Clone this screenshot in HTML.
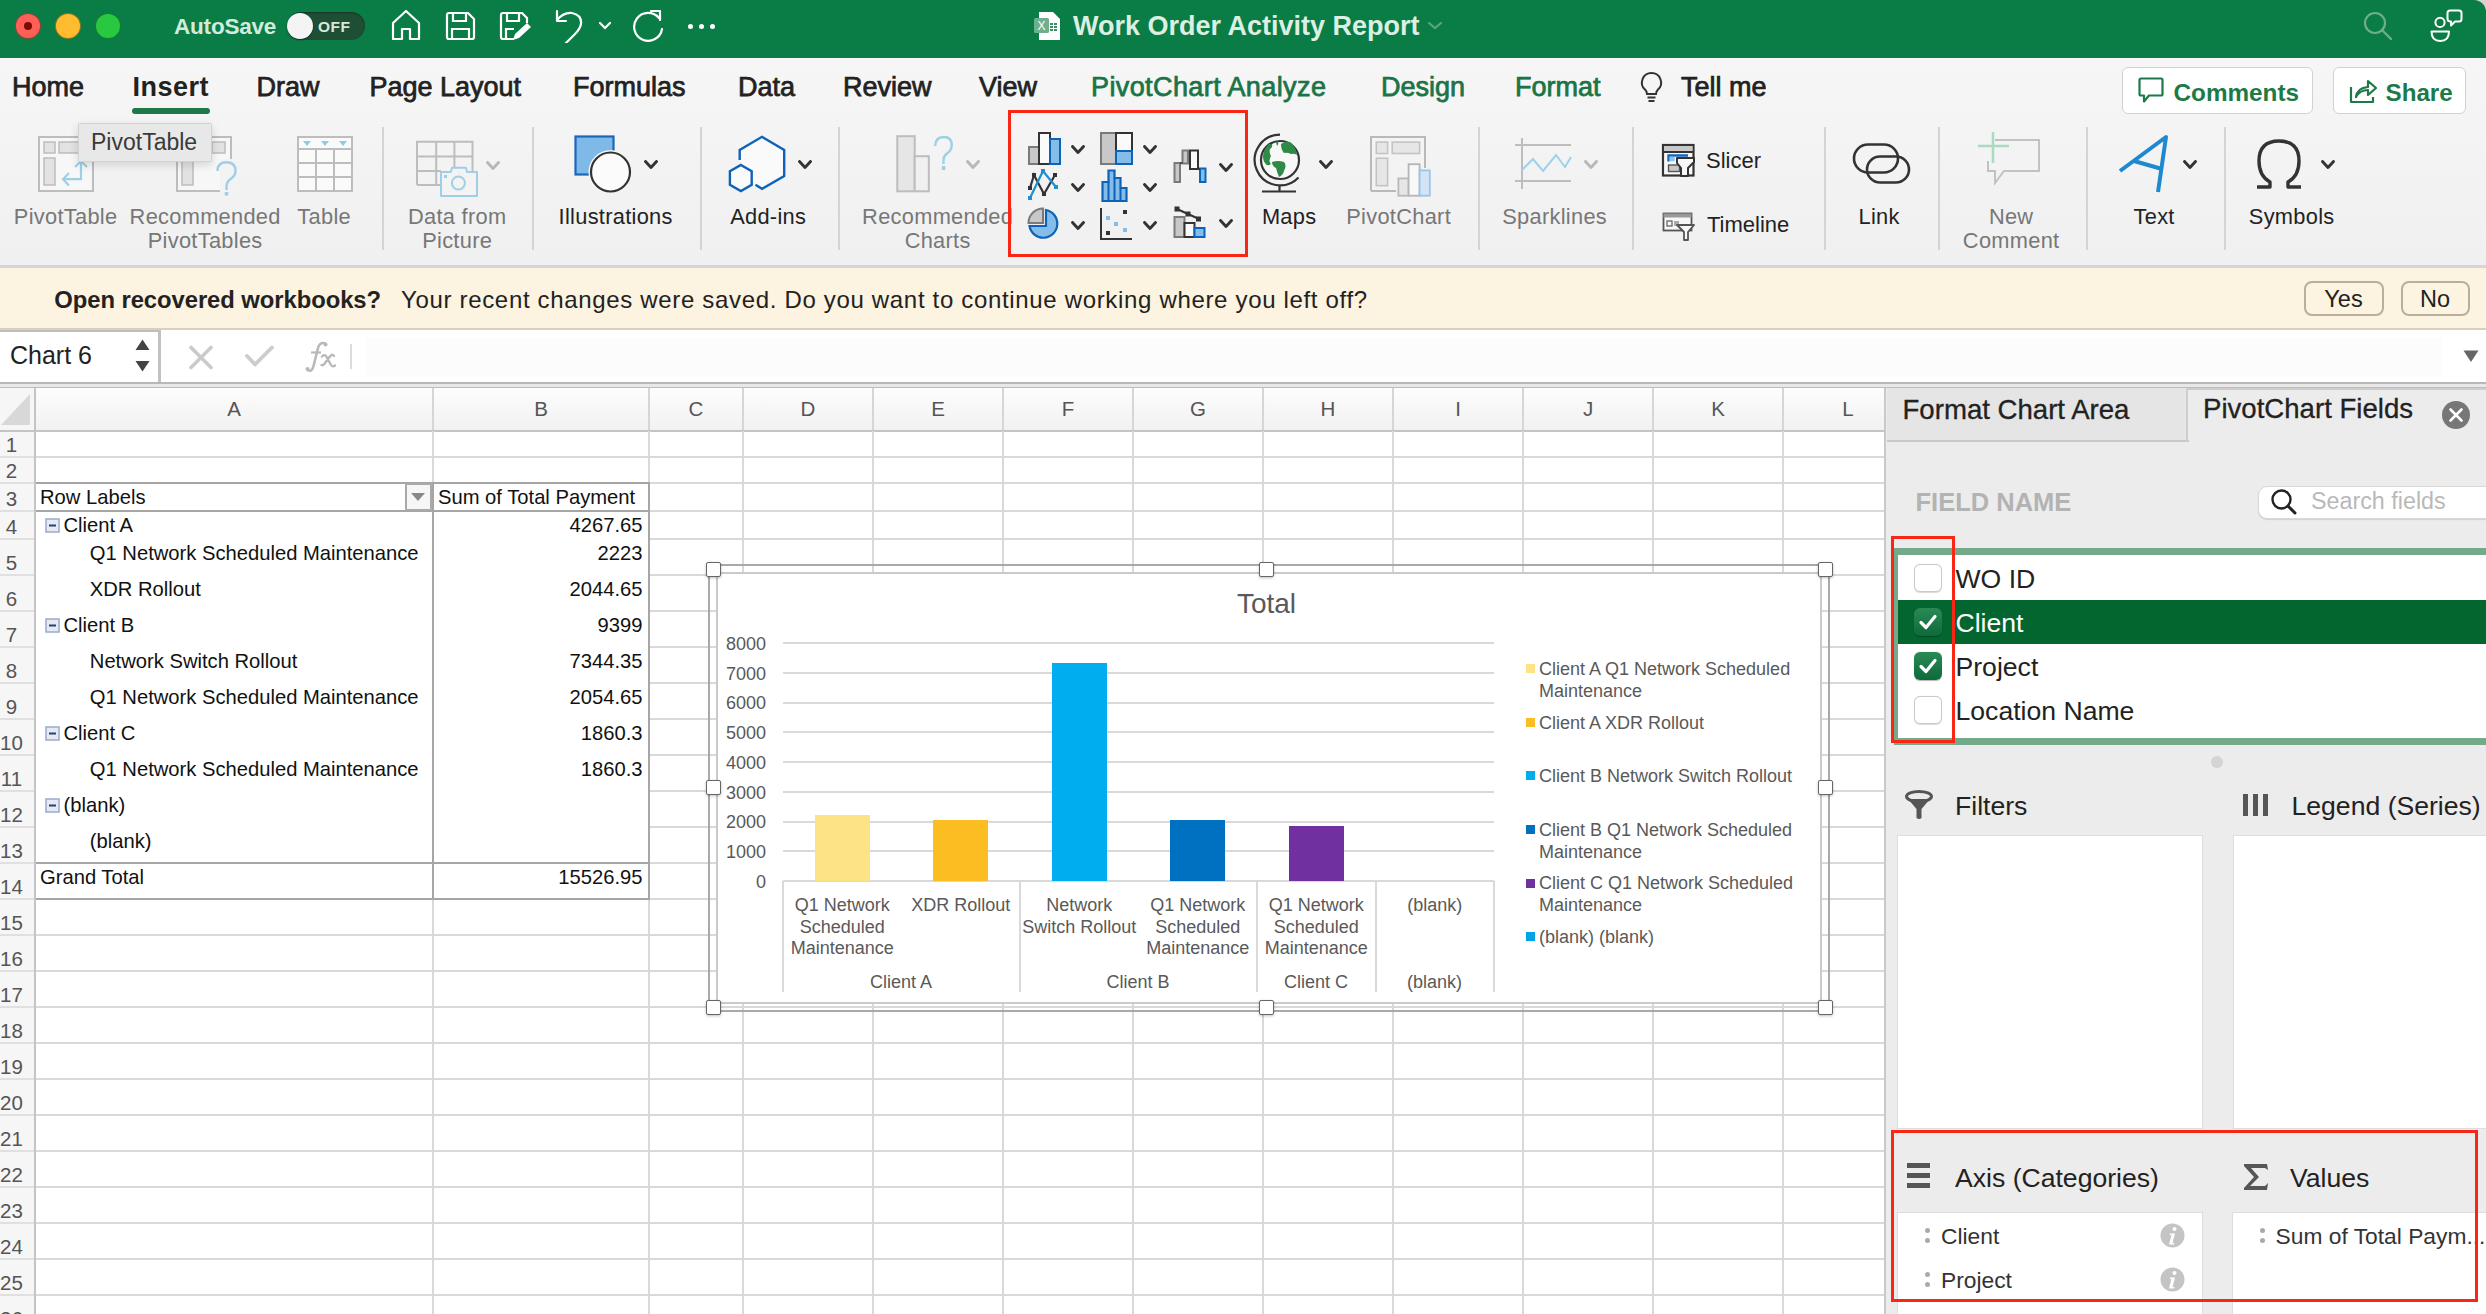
<!DOCTYPE html><html><head><meta charset="utf-8"><style>
*{margin:0;padding:0;box-sizing:border-box}
html,body{width:2486px;height:1314px;overflow:hidden;background:#fff}
body{position:relative;font-family:"Liberation Sans",sans-serif}
.t{position:absolute;white-space:pre;line-height:1.15}
.b{position:absolute}
</style></head><body>

<div class="b" style="left:0px;top:0px;width:2486px;height:58px;background:#0a7c45"></div>
<div class="b" style="left:15px;top:13px;width:26px;height:26px;background:#fe5f57;border-radius:50%;border:1.5px solid rgba(0,40,20,0.45)"></div>
<div class="b" style="left:55px;top:13px;width:26px;height:26px;background:#febc2e;border-radius:50%;border:1.5px solid rgba(0,40,20,0.45)"></div>
<div class="b" style="left:95px;top:13px;width:26px;height:26px;background:#28c840;border-radius:50%;border:1.5px solid rgba(0,40,20,0.45)"></div>
<div class="b" style="left:24px;top:22px;width:8px;height:8px;background:#7a0b05;border-radius:50%"></div>
<div class="t" style="left:174px;top:13.8px;font-size:22.5px;color:#d3ebdd;font-weight:700;letter-spacing:-0.2px">AutoSave</div>
<div class="b" style="left:287px;top:12px;width:78px;height:28px;background:#1e4f34;border-radius:14px;box-shadow:inset 0 1px 2px rgba(0,0,0,.35)"></div>
<div class="b" style="left:287px;top:13px;width:26px;height:26px;background:#f4f4f4;border-radius:50%;box-shadow:0 1px 2px rgba(0,0,0,.4)"></div>
<div class="t" style="left:318px;top:18.2px;font-size:15.5px;color:#d6e8dd;font-weight:700;letter-spacing:0.5px">OFF</div>
<svg class="b" style="left:390px;top:9px" width="32" height="32" viewBox="0 0 32 32"><path d="M3 14 L16 2 L29 14 L29 30 L20 30 L20 20 L12 20 L12 30 L3 30 Z" fill="none" stroke="#ffffff" stroke-width="2.2" stroke-linejoin="round"/></svg>
<svg class="b" style="left:445px;top:11px" width="31" height="30" viewBox="0 0 31 30"><path d="M2 4 Q2 2 4 2 L23 2 L29 8 L29 26 Q29 28 27 28 L4 28 Q2 28 2 26 Z" fill="none" stroke="#ffffff" stroke-width="2.2" stroke-linejoin="round"/><path d="M8 2 L8 10 L21 10 L21 2" fill="none" stroke="#ffffff" stroke-width="2.2"/><path d="M7 28 L7 18 L24 18 L24 28" fill="none" stroke="#ffffff" stroke-width="2.2"/></svg>
<svg class="b" style="left:499px;top:11px" width="34" height="31" viewBox="0 0 34 31"><path d="M15 28 L4 28 Q2 28 2 26 L2 4 Q2 2 4 2 L23 2 L28 7 L28 12" fill="none" stroke="#ffffff" stroke-width="2.2" stroke-linejoin="round"/><path d="M8 2 L8 10 L20 10 L20 2" fill="none" stroke="#ffffff" stroke-width="2.2"/><path d="M7 28 L7 18 L15 18" fill="none" stroke="#ffffff" stroke-width="2.2"/><path d="M14 29 L16 23 L28 12 L32 16 L20 27 Z" fill="#ffffff"/></svg>
<svg class="b" style="left:554px;top:9px" width="32" height="34" viewBox="0 0 32 34"><path d="M3 2 L3 12 L12 12" fill="none" stroke="#ffffff" stroke-width="2.2" stroke-linecap="round" stroke-linejoin="round"/><path d="M3 11 Q10 3 18 4 Q28 6 27 15 Q26 20 21 25 L8 38" fill="none" stroke="#ffffff" stroke-width="2.2" stroke-linecap="round"/></svg>
<svg class="b" style="left:598px;top:21px" width="14" height="10" viewBox="0 0 14 10"><path d="M2 2 L7 7 L12 2" fill="none" stroke="#ffffff" stroke-width="2.2" stroke-linecap="round"/></svg>
<svg class="b" style="left:631px;top:9px" width="34" height="34" viewBox="0 0 34 34"><path d="M28 9 A14 14 0 1 0 31 20" fill="none" stroke="#ffffff" stroke-width="2.2" stroke-linecap="round"/><path d="M20 2 L29 2 L29 11" fill="none" stroke="#ffffff" stroke-width="2.2" stroke-linecap="round" stroke-linejoin="round"/></svg>
<div class="b" style="left:687.5px;top:23.5px;width:5px;height:5px;background:#fff;border-radius:50%"></div>
<div class="b" style="left:698.5px;top:23.5px;width:5px;height:5px;background:#fff;border-radius:50%"></div>
<div class="b" style="left:709.5px;top:23.5px;width:5px;height:5px;background:#fff;border-radius:50%"></div>
<svg class="b" style="left:1034px;top:11px" width="28" height="30" viewBox="0 0 28 30"><path d="M5 1 L19 1 L26 8 L26 29 L5 29 Z" fill="#fff"/><rect x="0" y="7" width="15" height="15" rx="1.5" fill="#6fb08c"/><text x="7.5" y="19" font-size="12" fill="#fff" text-anchor="middle" font-family="Liberation Sans">X</text><g fill="#3e8d62"><rect x="16" y="12" width="3" height="2"/><rect x="20" y="12" width="3" height="2"/><rect x="16" y="15" width="3" height="2"/><rect x="20" y="15" width="3" height="2"/><rect x="16" y="18" width="3" height="2"/><rect x="20" y="18" width="3" height="2"/></g></svg>
<div class="t" style="left:1073px;top:11.4px;font-size:27px;color:#dcefe3;font-weight:700;">Work Order Activity Report</div>
<svg class="b" style="left:1427px;top:21px" width="16" height="10" viewBox="0 0 16 10"><path d="M2 2 L8 7 L14 2" fill="none" stroke="#5aa57c" stroke-width="2.2" stroke-linecap="round"/></svg>
<svg class="b" style="left:2362px;top:10px" width="32" height="32" viewBox="0 0 32 32"><circle cx="13" cy="13" r="10" fill="none" stroke="#6fae8b" stroke-width="2.2"/><path d="M20.5 20.5 L29 29" stroke="#6fae8b" stroke-width="2.4" stroke-linecap="round"/></svg>
<svg class="b" style="left:2428px;top:9px" width="36" height="34" viewBox="0 0 36 34"><circle cx="12" cy="13.4" r="4.6" fill="none" stroke="#ffffff" stroke-width="2"/><path d="M3.5 22.5 L21 22.5 Q21 32 12.3 32 Q3.5 32 3.5 22.5 Z" fill="none" stroke="#ffffff" stroke-width="2" stroke-linejoin="round"/><path d="M19.5 4 Q19.5 1.5 22 1.5 L31 1.5 Q33.5 1.5 33.5 4 L33.5 10 Q33.5 12.5 31 12.5 L27 12.5 L23 16.5 L23 12.5 Q19.5 12.5 19.5 10 Z" fill="none" stroke="#ffffff" stroke-width="2" stroke-linejoin="round"/></svg>
<svg class="b" style="left:2474px;top:0px" width="12" height="12" viewBox="0 0 12 12"><path d="M0 0 L12 0 L12 12 A12 12 0 0 0 0 0 Z" fill="#d9d4d4"/></svg>
<div class="b" style="left:0px;top:58px;width:2486px;height:208px;background:linear-gradient(#f6f6f6,#f0f0f0)"></div>
<div class="b" style="left:0px;top:265px;width:2486px;height:3px;background:#d6d6d6"></div>
<div class="t" style="left:12px;top:72.4px;font-size:27px;color:#222;font-weight:400;-webkit-text-stroke:0.75px currentColor;">Home</div>
<div class="t" style="left:256.5px;top:72.4px;font-size:27px;color:#222;font-weight:400;-webkit-text-stroke:0.75px currentColor;">Draw</div>
<div class="t" style="left:369.5px;top:72.4px;font-size:27px;color:#222;font-weight:400;-webkit-text-stroke:0.75px currentColor;">Page Layout</div>
<div class="t" style="left:573px;top:72.4px;font-size:27px;color:#222;font-weight:400;-webkit-text-stroke:0.75px currentColor;">Formulas</div>
<div class="t" style="left:738px;top:72.4px;font-size:27px;color:#222;font-weight:400;-webkit-text-stroke:0.75px currentColor;">Data</div>
<div class="t" style="left:843px;top:72.4px;font-size:27px;color:#222;font-weight:400;-webkit-text-stroke:0.75px currentColor;">Review</div>
<div class="t" style="left:979px;top:72.4px;font-size:27px;color:#222;font-weight:400;-webkit-text-stroke:0.75px currentColor;">View</div>
<div class="t" style="left:1091px;top:72.4px;font-size:27px;color:#1b7446;font-weight:400;-webkit-text-stroke:0.75px currentColor;letter-spacing:0.4px;">PivotChart Analyze</div>
<div class="t" style="left:1381px;top:72.4px;font-size:27px;color:#1b7446;font-weight:400;-webkit-text-stroke:0.75px currentColor;">Design</div>
<div class="t" style="left:1515px;top:72.4px;font-size:27px;color:#1b7446;font-weight:400;-webkit-text-stroke:0.75px currentColor;">Format</div>
<div class="t" style="left:1681px;top:72.4px;font-size:27px;color:#222;font-weight:400;-webkit-text-stroke:0.75px currentColor;">Tell me</div>
<div class="t" style="left:132.5px;top:72.4px;font-size:27px;color:#222;font-weight:700;letter-spacing:0.5px">Insert</div>
<div class="b" style="left:132px;top:108px;width:78px;height:6px;background:#1d7a48;border-radius:3px"></div>
<svg class="b" style="left:1639px;top:71px" width="25" height="32" viewBox="0 0 25 32"><path d="M12.5 2 A9.5 9.5 0 0 0 6 18.5 Q8 20.5 8 23 L17 23 Q17 20.5 19 18.5 A9.5 9.5 0 0 0 12.5 2 Z" fill="none" stroke="#333" stroke-width="2"/><path d="M8.5 26.5 L16.5 26.5 M9.5 30 L15.5 30" stroke="#333" stroke-width="2"/></svg>
<div class="b" style="left:2121.5px;top:66.5px;width:191px;height:47px;background:#fff;border:1.5px solid #d2d2d2;border-radius:6px"></div>
<svg class="b" style="left:2137px;top:77px" width="28" height="28" viewBox="0 0 28 28"><path d="M2.5 3 Q2.5 1.5 4 1.5 L24 1.5 Q25.5 1.5 25.5 3 L25.5 17 Q25.5 18.5 24 18.5 L12 18.5 L7 24.5 L7 18.5 L4 18.5 Q2.5 18.5 2.5 17 Z" fill="none" stroke="#1d7a48" stroke-width="2.2" stroke-linejoin="round"/></svg>
<div class="t" style="left:2173.5px;top:78.6px;font-size:24.3px;color:#1d7a48;font-weight:700;">Comments</div>
<div class="b" style="left:2333px;top:66.5px;width:133px;height:47px;background:#fff;border:1.5px solid #d2d2d2;border-radius:6px"></div>
<svg class="b" style="left:2348px;top:77px" width="30" height="28" viewBox="0 0 30 28"><path d="M3 10 L3 25 L25 25 L25 20" fill="none" stroke="#1d7a48" stroke-width="2.2" stroke-linejoin="round"/><path d="M8 20 Q9 11 20 10 L20 4 L28 11 L20 18 L20 13 Q12 13 8 20 Z" fill="none" stroke="#1d7a48" stroke-width="2.2" stroke-linejoin="round"/></svg>
<div class="t" style="left:2385.5px;top:78.7px;font-size:24.2px;color:#1d7a48;font-weight:700;">Share</div>
<div class="b" style="left:382px;top:126.5px;width:2px;height:123px;background:#d4d4d4"></div>
<div class="b" style="left:532px;top:126.5px;width:2px;height:123px;background:#d4d4d4"></div>
<div class="b" style="left:700px;top:126.5px;width:2px;height:123px;background:#d4d4d4"></div>
<div class="b" style="left:838px;top:126.5px;width:2px;height:123px;background:#d4d4d4"></div>
<div class="b" style="left:1477.5px;top:126.5px;width:2px;height:123px;background:#d4d4d4"></div>
<div class="b" style="left:1632px;top:126.5px;width:2px;height:123px;background:#d4d4d4"></div>
<div class="b" style="left:1824px;top:126.5px;width:2px;height:123px;background:#d4d4d4"></div>
<div class="b" style="left:1938px;top:126.5px;width:2px;height:123px;background:#d4d4d4"></div>
<div class="b" style="left:2086px;top:126.5px;width:2px;height:123px;background:#d4d4d4"></div>
<div class="b" style="left:2224px;top:126.5px;width:2px;height:123px;background:#d4d4d4"></div>
<div class="t" style="left:-934.35px;width:2000px;text-align:center;top:203.7px;font-size:21.8px;color:#777;font-weight:400;letter-spacing:0.3px">PivotTable</div>
<div class="t" style="left:-794.85px;width:2000px;text-align:center;top:203.7px;font-size:21.8px;color:#777;font-weight:400;letter-spacing:0.3px">Recommended</div>
<div class="t" style="left:-794.85px;width:2000px;text-align:center;top:227.5px;font-size:21.8px;color:#777;font-weight:400;letter-spacing:0.3px">PivotTables</div>
<div class="t" style="left:-675.85px;width:2000px;text-align:center;top:203.7px;font-size:21.8px;color:#777;font-weight:400;letter-spacing:0.3px">Table</div>
<div class="t" style="left:-542.85px;width:2000px;text-align:center;top:203.7px;font-size:21.8px;color:#777;font-weight:400;letter-spacing:0.3px">Data from</div>
<div class="t" style="left:-542.85px;width:2000px;text-align:center;top:227.5px;font-size:21.8px;color:#777;font-weight:400;letter-spacing:0.3px">Picture</div>
<div class="t" style="left:-384.35px;width:2000px;text-align:center;top:203.7px;font-size:21.8px;color:#222;font-weight:400;letter-spacing:0.3px">Illustrations</div>
<div class="t" style="left:-231.85000000000002px;width:2000px;text-align:center;top:203.7px;font-size:21.8px;color:#222;font-weight:400;letter-spacing:0.3px">Add-ins</div>
<div class="t" style="left:-62.35000000000002px;width:2000px;text-align:center;top:203.7px;font-size:21.8px;color:#777;font-weight:400;letter-spacing:0.3px">Recommended</div>
<div class="t" style="left:-62.35000000000002px;width:2000px;text-align:center;top:227.5px;font-size:21.8px;color:#777;font-weight:400;letter-spacing:0.3px">Charts</div>
<div class="t" style="left:289.1500000000001px;width:2000px;text-align:center;top:203.7px;font-size:21.8px;color:#222;font-weight:400;letter-spacing:0.3px">Maps</div>
<div class="t" style="left:398.6500000000001px;width:2000px;text-align:center;top:203.7px;font-size:21.8px;color:#777;font-weight:400;letter-spacing:0.3px">PivotChart</div>
<div class="t" style="left:554.6500000000001px;width:2000px;text-align:center;top:203.7px;font-size:21.8px;color:#777;font-weight:400;letter-spacing:0.3px">Sparklines</div>
<div class="t" style="left:879.1500000000001px;width:2000px;text-align:center;top:203.7px;font-size:21.8px;color:#222;font-weight:400;letter-spacing:0.3px">Link</div>
<div class="t" style="left:1011.1500000000001px;width:2000px;text-align:center;top:203.7px;font-size:21.8px;color:#777;font-weight:400;letter-spacing:0.3px">New</div>
<div class="t" style="left:1011.1500000000001px;width:2000px;text-align:center;top:227.5px;font-size:21.8px;color:#777;font-weight:400;letter-spacing:0.3px">Comment</div>
<div class="t" style="left:1154.15px;width:2000px;text-align:center;top:203.7px;font-size:21.8px;color:#222;font-weight:400;letter-spacing:0.3px">Text</div>
<div class="t" style="left:1291.65px;width:2000px;text-align:center;top:203.7px;font-size:21.8px;color:#222;font-weight:400;letter-spacing:0.3px">Symbols</div>
<div class="t" style="left:1706px;top:148.2px;font-size:22px;color:#222;font-weight:400;">Slicer</div>
<div class="t" style="left:1707px;top:212.2px;font-size:22px;color:#222;font-weight:400;">Timeline</div>
<svg class="b" style="left:38px;top:136px" width="56" height="56" viewBox="0 0 56 56"><rect x="1" y="1" width="54" height="54" fill="#f7f7f7" stroke="#bdbdbd" stroke-width="2"/><rect x="6" y="6" width="11" height="11" fill="#e2e2e2" stroke="#bdbdbd" stroke-width="1.5"/><rect x="21" y="6" width="28" height="11" fill="#e2e2e2" stroke="#bdbdbd" stroke-width="1.5"/><rect x="6" y="22" width="11" height="27" fill="#e2e2e2" stroke="#bdbdbd" stroke-width="1.5"/><path d="M43 25 L43 43.2 L25 43.2" fill="none" stroke="#9fcfe6" stroke-width="2.2"/><path d="M37 31 L43 25 L49 31 M31 37 L25 43.2 L31 49.5" fill="none" stroke="#9fcfe6" stroke-width="2.2"/></svg>
<svg class="b" style="left:176px;top:136px" width="62" height="62" viewBox="0 0 62 62"><rect x="1" y="1" width="54" height="54" fill="#f7f7f7" stroke="#bdbdbd" stroke-width="2"/><rect x="6" y="22" width="11" height="27" fill="#e2e2e2" stroke="#bdbdbd" stroke-width="1.5"/><rect x="36" y="6" width="13" height="11" fill="#e2e2e2" stroke="#bdbdbd" stroke-width="1.5"/><rect x="44" y="23" width="18" height="38" fill="#f3f3f3"/><path d="M41.5 35 Q41.5 26.3 50.5 26.3 Q59.5 26.3 59.5 35 Q59.5 40 54 43.5 Q50.5 46 50.5 51 L50.5 54" fill="none" stroke="#9fcfe6" stroke-width="2.4"/><rect x="48.7" y="56" width="3.6" height="3.6" fill="#9fcfe6"/></svg>
<div class="b" style="left:78px;top:123.4px;width:134px;height:38.5px;background:#e8e8e8;border:1px solid #d2d2d2;border-radius:1.5px;box-shadow:0 3px 8px rgba(0,0,0,0.14)"></div>
<div class="t" style="left:91px;top:128.8px;font-size:23px;color:#3a3a3a;font-weight:400;">PivotTable</div>
<svg class="b" style="left:297px;top:136px" width="56" height="56" viewBox="0 0 56 56"><rect x="1" y="1" width="54" height="54" fill="#fafafa" stroke="#bdbdbd" stroke-width="2"/><path d="M1 13 L55 13 M1 27 L55 27 M1 41 L55 41 M19 13 L19 55 M37 13 L37 55" stroke="#bdbdbd" stroke-width="2"/><path d="M6 5 L14 5 L10 10 Z M24 5 L32 5 L28 10 Z M42 5 L50 5 L46 10 Z" fill="#8fcbe8"/></svg>
<svg class="b" style="left:416px;top:140px" width="64" height="58" viewBox="0 0 64 58"><path d="M1 45 L1 1.7 L56.5 1.7 L56.5 31 M1 16.5 L56.5 16.5 M1 31 L25 31 M20.2 1.7 L20.2 45 M38.4 1.7 L38.4 27 M1 45 L25 45" fill="none" stroke="#bdbdbd" stroke-width="2"/><path d="M25 32 L34.8 32 L36 27.8 L50 27.8 L51 32 L61 32 L61 56 L25 56 Z" fill="#f3f3f3" stroke="#9fcfe6" stroke-width="2" stroke-linejoin="round"/><circle cx="42.4" cy="43" r="6.5" fill="none" stroke="#9fcfe6" stroke-width="2"/><rect x="28" y="35" width="3" height="3" fill="#9fcfe6"/></svg>
<svg class="b" style="left:486px;top:161px" width="14" height="10" viewBox="0 0 14 10"><path d="M1.5 1.5 L7.0 7.5 L12.5 1.5" fill="none" stroke="#b8b8b8" stroke-width="2.9" stroke-linecap="round" stroke-linejoin="round"/></svg>
<svg class="b" style="left:574px;top:135px" width="62" height="62" viewBox="0 0 62 62"><rect x="1.5" y="1.5" width="38" height="38" fill="#7fb9e8" stroke="#1a66b8" stroke-width="2.2"/><circle cx="36.5" cy="37" r="22" fill="#f4f4f4"/><circle cx="36.5" cy="37" r="19.5" fill="#fbfbfb" stroke="#333" stroke-width="2.2"/></svg>
<svg class="b" style="left:644px;top:160px" width="14" height="10" viewBox="0 0 14 10"><path d="M1.5 1.5 L7.0 7.5 L12.5 1.5" fill="none" stroke="#333" stroke-width="2.9" stroke-linecap="round" stroke-linejoin="round"/></svg>
<svg class="b" style="left:726px;top:133px" width="62" height="62" viewBox="0 0 62 62"><path d="M29.5 51.8 L36 55.8 L58.2 43 L58.2 17 L36 3.8 L13.7 17 L13.7 27" fill="#fafafa" stroke="#0f62b8" stroke-width="2.4" stroke-linejoin="miter"/><path d="M14.9 32 L25.7 38.2 L25.7 51.8 L14.9 58 L3.9 51.8 L3.9 38.2 Z" fill="#fafafa" stroke="#0f62b8" stroke-width="2.4"/></svg>
<svg class="b" style="left:798px;top:160px" width="14" height="10" viewBox="0 0 14 10"><path d="M1.5 1.5 L7.0 7.5 L12.5 1.5" fill="none" stroke="#333" stroke-width="2.9" stroke-linecap="round" stroke-linejoin="round"/></svg>
<svg class="b" style="left:896px;top:134px" width="62" height="62" viewBox="0 0 62 62"><rect x="1.3" y="2.2" width="17.4" height="55.1" fill="#e6e6e6" stroke="#bdbdbd" stroke-width="2"/><rect x="18.7" y="22.2" width="14.1" height="35.1" fill="#f0f0f0" stroke="#bdbdbd" stroke-width="2"/><path d="M39.2 12 Q39.5 3 47.5 3 Q55.8 3 55.8 11 Q55.8 16 51 19.5 Q47.5 22 47.5 26 L47.5 30" fill="none" stroke="#9fcfe6" stroke-width="2.4"/><rect x="45.8" y="32" width="3.6" height="4" fill="#9fcfe6"/></svg>
<svg class="b" style="left:966px;top:160px" width="14" height="10" viewBox="0 0 14 10"><path d="M1.5 1.5 L7.0 7.5 L12.5 1.5" fill="none" stroke="#b8b8b8" stroke-width="2.9" stroke-linecap="round" stroke-linejoin="round"/></svg>
<div class="b" style="left:1007.5px;top:110px;width:240px;height:147px;border:3px solid #f92616"></div>
<svg class="b" style="left:1028px;top:132px" width="33" height="33" viewBox="0 0 33 33"><rect x="1" y="15" width="10" height="17" fill="#c8c8c8" stroke="#7a7a7a" stroke-width="2"/><rect x="11" y="1" width="11" height="31" fill="#fafafa" stroke="#333" stroke-width="2"/><rect x="22" y="7" width="10" height="25" fill="#84bde9" stroke="#0d63b8" stroke-width="2"/></svg>
<svg class="b" style="left:1071px;top:145px" width="14" height="10" viewBox="0 0 14 10"><path d="M1.5 1.5 L7.0 7.5 L12.5 1.5" fill="none" stroke="#333" stroke-width="2.9" stroke-linecap="round" stroke-linejoin="round"/></svg>
<svg class="b" style="left:1100px;top:132px" width="33" height="33" viewBox="0 0 33 33"><rect x="1" y="1" width="15" height="31" fill="#c8c8c8" stroke="#7a7a7a" stroke-width="2"/><rect x="16" y="1" width="16" height="18" fill="#fafafa" stroke="#333" stroke-width="2"/><rect x="16" y="19" width="16" height="13" fill="#84bde9" stroke="#0d63b8" stroke-width="2"/></svg>
<svg class="b" style="left:1143px;top:145px" width="14" height="10" viewBox="0 0 14 10"><path d="M1.5 1.5 L7.0 7.5 L12.5 1.5" fill="none" stroke="#333" stroke-width="2.9" stroke-linecap="round" stroke-linejoin="round"/></svg>
<svg class="b" style="left:1173px;top:149px" width="35" height="35" viewBox="0 0 35 35"><rect x="1.5" y="14" width="5.5" height="19" fill="#c8c8c8" stroke="#7a7a7a" stroke-width="2"/><rect x="9.5" y="1.5" width="5.5" height="13" fill="#c8c8c8" stroke="#7a7a7a" stroke-width="2"/><rect x="17" y="1.5" width="8" height="18.5" fill="#fafafa" stroke="#333" stroke-width="2"/><rect x="27" y="19.5" width="5.5" height="13.5" fill="#84bde9" stroke="#0d63b8" stroke-width="2"/><path d="M7 14 L9.5 14 M25 20 L27 20" stroke="#333" stroke-width="1.5"/></svg>
<svg class="b" style="left:1219px;top:163px" width="14" height="10" viewBox="0 0 14 10"><path d="M1.5 1.5 L7.0 7.5 L12.5 1.5" fill="none" stroke="#333" stroke-width="2.9" stroke-linecap="round" stroke-linejoin="round"/></svg>
<svg class="b" style="left:1027px;top:169px" width="34" height="33" viewBox="0 0 34 33"><path d="M3 19 L7 6 L17 25 L28 6" fill="none" stroke="#333" stroke-width="2.2"/><path d="M3 29 L16 2 L29 18" fill="none" stroke="#1e90d0" stroke-width="2.2"/><rect x="1" y="17" width="4" height="4" fill="#333"/><rect x="5" y="4" width="4" height="4" fill="#333"/><rect x="15" y="23" width="4" height="4" fill="#333"/><rect x="26" y="4" width="4" height="4" fill="#333"/><rect x="1" y="27" width="4" height="4" fill="#1e90d0"/><rect x="14" y="0" width="4" height="4" fill="#1e90d0"/><rect x="27" y="16" width="4" height="4" fill="#1e90d0"/></svg>
<svg class="b" style="left:1071px;top:183px" width="14" height="10" viewBox="0 0 14 10"><path d="M1.5 1.5 L7.0 7.5 L12.5 1.5" fill="none" stroke="#333" stroke-width="2.9" stroke-linecap="round" stroke-linejoin="round"/></svg>
<svg class="b" style="left:1101px;top:169px" width="30" height="34" viewBox="0 0 30 34"><path d="M1.5 32 L1.5 13 L7.5 13 L7.5 1.5 L13.5 1.5 L13.5 9 L19.5 9 L19.5 19 L25.5 19 L25.5 32 Z" fill="#84bde9" stroke="#0d63b8" stroke-width="2.2"/><path d="M7.5 13 L7.5 32 M13.5 9 L13.5 32 M19.5 19 L19.5 32" stroke="#0d63b8" stroke-width="2"/></svg>
<svg class="b" style="left:1143px;top:183px" width="14" height="10" viewBox="0 0 14 10"><path d="M1.5 1.5 L7.0 7.5 L12.5 1.5" fill="none" stroke="#333" stroke-width="2.9" stroke-linecap="round" stroke-linejoin="round"/></svg>
<svg class="b" style="left:1027px;top:207px" width="34" height="34" viewBox="0 0 34 34"><path d="M16 16 L16 1.5 A14.5 14.5 0 0 0 1.5 16 Z" fill="#c8c8c8" stroke="#7a7a7a" stroke-width="2"/><path d="M19 3 A14 14 0 1 1 2.5 19 L19 19 Z" fill="#84bde9" stroke="#0d63b8" stroke-width="2.2"/></svg>
<svg class="b" style="left:1071px;top:221px" width="14" height="10" viewBox="0 0 14 10"><path d="M1.5 1.5 L7.0 7.5 L12.5 1.5" fill="none" stroke="#333" stroke-width="2.9" stroke-linecap="round" stroke-linejoin="round"/></svg>
<svg class="b" style="left:1099px;top:207px" width="34" height="34" viewBox="0 0 34 34"><path d="M2 1 L2 32 L33 32" fill="none" stroke="#333" stroke-width="2"/><rect x="7" y="9" width="4" height="4" fill="#84bde9"/><rect x="15" y="15" width="4" height="4" fill="#84bde9"/><rect x="24" y="21" width="4" height="4" fill="#84bde9"/><rect x="24" y="3" width="4" height="4" fill="#333"/><rect x="7" y="24" width="4" height="4" fill="#333"/></svg>
<svg class="b" style="left:1143px;top:221px" width="14" height="10" viewBox="0 0 14 10"><path d="M1.5 1.5 L7.0 7.5 L12.5 1.5" fill="none" stroke="#333" stroke-width="2.9" stroke-linecap="round" stroke-linejoin="round"/></svg>
<svg class="b" style="left:1173px;top:205px" width="34" height="34" viewBox="0 0 34 34"><rect x="1.5" y="12" width="10" height="20" fill="#c8c8c8" stroke="#7a7a7a" stroke-width="2"/><rect x="11.5" y="18" width="10" height="14" fill="#fafafa" stroke="#333" stroke-width="2"/><rect x="21.5" y="23" width="10" height="9" fill="#84bde9" stroke="#0d63b8" stroke-width="2"/><path d="M4 4 L15 9 L26 14" stroke="#333" stroke-width="2"/><rect x="1.5" y="1.5" width="5" height="5" fill="#333"/><rect x="12.5" y="6.5" width="5" height="5" fill="#333"/><rect x="23" y="11.5" width="5" height="5" fill="#333"/></svg>
<svg class="b" style="left:1219px;top:219px" width="14" height="10" viewBox="0 0 14 10"><path d="M1.5 1.5 L7.0 7.5 L12.5 1.5" fill="none" stroke="#333" stroke-width="2.9" stroke-linecap="round" stroke-linejoin="round"/></svg>
<svg class="b" style="left:1250px;top:130px" width="54" height="64" viewBox="0 0 54 64"><path d="M30 4.6 A25.4 25.4 0 1 0 48.5 47.5" fill="none" stroke="#333" stroke-width="2.2"/><circle cx="30" cy="30" r="19" fill="#f8f8f8" stroke="#333" stroke-width="2.2"/><path d="M13 26 Q14 18 19 14 L22 14 Q23 17 20 19 Q19 23 21 26 Q18 31 21 34 Q17 37 15 33 Q13 31 13 26 Z" fill="#2f8a47"/><path d="M26 12 L28 11 Q29 14 27 16 Z M31 14 Q35 11 40 12 Q46 16 47 25 Q44 23 41 24 Q37 22 34 23 Q31 20 31 14 Z" fill="#2f8a47"/><path d="M22 32 Q28 30 34 32 Q37 35 34 41 Q33 45 29 47 Q27 42 26 38 Q22 36 22 32 Z" fill="#2f8a47"/><path d="M29.5 56 L29.5 61 M12 61.5 L46 61.5" stroke="#333" stroke-width="2.2"/></svg>
<svg class="b" style="left:1319px;top:160px" width="14" height="10" viewBox="0 0 14 10"><path d="M1.5 1.5 L7.0 7.5 L12.5 1.5" fill="none" stroke="#333" stroke-width="2.9" stroke-linecap="round" stroke-linejoin="round"/></svg>
<svg class="b" style="left:1369px;top:135px" width="64" height="64" viewBox="0 0 64 64"><path d="M2 56 L2 2 L56 2 L56 33 M2 56 L27 56" fill="none" stroke="#b9b9b9" stroke-width="2"/><rect x="7.3" y="7.1" width="11.3" height="11.4" fill="#e6e6e6" stroke="#c4c4c4" stroke-width="1.6"/><rect x="23.2" y="7.1" width="27.4" height="11.4" fill="#e6e6e6" stroke="#c4c4c4" stroke-width="1.6"/><rect x="7.3" y="23.2" width="11.3" height="27.5" fill="#e6e6e6" stroke="#c4c4c4" stroke-width="1.6"/><rect x="29.4" y="43.4" width="10.2" height="17.3" fill="#e6e6e6" stroke="#b9b9b9" stroke-width="1.8"/><rect x="39.6" y="29.2" width="11" height="31.5" fill="#f8f8f8" stroke="#b5b5b5" stroke-width="1.8"/><rect x="50.6" y="35.4" width="10.2" height="25.3" fill="#d3e5f5" stroke="#9cc4e6" stroke-width="1.8"/></svg>
<svg class="b" style="left:1513px;top:137px" width="60" height="52" viewBox="0 0 60 52"><path d="M2 44 L58 44 M9 1 L9 52 M2 8 L58 8" stroke="#bdbdbd" stroke-width="2"/><path d="M9 33 L20 22 L30 34 L43 18 L52 30 L58 20" fill="none" stroke="#9fd0ea" stroke-width="2"/></svg>
<svg class="b" style="left:1584px;top:160px" width="14" height="10" viewBox="0 0 14 10"><path d="M1.5 1.5 L7.0 7.5 L12.5 1.5" fill="none" stroke="#b8b8b8" stroke-width="2.9" stroke-linecap="round" stroke-linejoin="round"/></svg>
<svg class="b" style="left:1660px;top:142px" width="36" height="36" viewBox="0 0 36 36"><rect x="3" y="3" width="30.5" height="30.5" fill="#f8f8f8" stroke="#333" stroke-width="2.2"/><rect x="4" y="4" width="28.5" height="5" fill="#c8c8c8"/><path d="M3 10 L33.5 10" stroke="#333" stroke-width="2"/><path d="M8.5 19.5 L8.5 13.5 L28 13.5" fill="none" stroke="#1066c0" stroke-width="2.4"/><rect x="9.7" y="14.7" width="5" height="4.5" fill="#8cc3ee"/><rect x="8.5" y="23" width="11" height="6.5" fill="#c8c8c8" stroke="#555" stroke-width="1.4"/><path d="M17 16 L34 16 L34 20 L28 26 L28 34 L21 34 L21 26 L17 21 Z" fill="#f8f8f8" stroke="#333" stroke-width="2" stroke-linejoin="round"/></svg>
<svg class="b" style="left:1662px;top:212px" width="34" height="30" viewBox="0 0 34 30"><rect x="1.5" y="1.5" width="28" height="17" fill="#f8f8f8" stroke="#555" stroke-width="1.8"/><rect x="1.5" y="1.5" width="28" height="4" fill="#999"/><rect x="5" y="9" width="5" height="5" fill="none" stroke="#666" stroke-width="1.3"/><rect x="12" y="9" width="5" height="5" fill="#aaa"/><path d="M15 13 L32 13 L26 20 L26 28 L22 28 L22 20 Z" fill="#f8f8f8" stroke="#555" stroke-width="1.8" stroke-linejoin="round"/></svg>
<svg class="b" style="left:1851px;top:141px" width="62" height="46" viewBox="0 0 62 46"><rect x="3" y="3.5" width="44" height="28" rx="14" fill="none" stroke="#333" stroke-width="2.6"/><rect x="16" y="15.5" width="42" height="26" rx="13" fill="none" stroke="#333" stroke-width="2.6"/></svg>
<svg class="b" style="left:1977px;top:131px" width="64" height="60" viewBox="0 0 64 60"><path d="M18 9 L62 9 L62 40 L27 40 L18 52 L18 40 L11 40 L11 30" fill="#f3f3f3" stroke="#c2c2c2" stroke-width="2"/><path d="M16 1 L16 32 M1 15 L32 15" stroke="#a7dcc0" stroke-width="2.5"/></svg>
<svg class="b" style="left:2118px;top:134px" width="52" height="60" viewBox="0 0 52 60"><path d="M2 37 L48 3 L40 58" fill="none" stroke="#1e88d0" stroke-width="4" stroke-linejoin="round"/><path d="M16 27 L44 35" stroke="#1e88d0" stroke-width="4"/></svg>
<svg class="b" style="left:2183px;top:160px" width="14" height="10" viewBox="0 0 14 10"><path d="M1.5 1.5 L7.0 7.5 L12.5 1.5" fill="none" stroke="#333" stroke-width="2.9" stroke-linecap="round" stroke-linejoin="round"/></svg>
<svg class="b" style="left:2255px;top:139px" width="50" height="51" viewBox="0 0 50 51"><path d="M2 48 L15 48 L15 43 Q4 37 4 22 Q4 2 24 2 Q44 2 44 22 Q44 37 33 43 L33 48 L46 48" fill="none" stroke="#333" stroke-width="3.4" stroke-linejoin="round"/></svg>
<svg class="b" style="left:2321px;top:160px" width="14" height="10" viewBox="0 0 14 10"><path d="M1.5 1.5 L7.0 7.5 L12.5 1.5" fill="none" stroke="#333" stroke-width="2.9" stroke-linecap="round" stroke-linejoin="round"/></svg>
<div class="b" style="left:0px;top:268px;width:2486px;height:61px;background:#fcf3e0"></div>
<div class="b" style="left:0px;top:328px;width:2486px;height:2px;background:#d9d0bc"></div>
<div class="t" style="left:54.3px;top:286.1px;font-size:23.8px;color:#222;font-weight:700;letter-spacing:-0.05px">Open recovered workbooks?</div>
<div class="t" style="left:401px;top:285.9px;font-size:24px;color:#222;font-weight:400;letter-spacing:0.67px">Your recent changes were saved. Do you want to continue working where you left off?</div>
<div class="b" style="left:2304px;top:280.5px;width:79.5px;height:35px;border:2px solid #b7af9c;border-radius:8px"></div>
<div class="t" style="left:1343.5px;width:2000px;text-align:center;top:286.3px;font-size:23.5px;color:#222;font-weight:400;">Yes</div>
<div class="b" style="left:2400.5px;top:280.5px;width:69px;height:35px;border:2px solid #b7af9c;border-radius:8px"></div>
<div class="t" style="left:1435px;width:2000px;text-align:center;top:286.3px;font-size:23.5px;color:#222;font-weight:400;">No</div>
<div class="b" style="left:0px;top:330px;width:2486px;height:52px;background:#fff"></div>
<div class="b" style="left:366px;top:338px;width:2076px;height:38px;background:#fcfcfc"></div>
<div class="b" style="left:0px;top:330px;width:161px;height:2px;background:#bdbdbd"></div>
<div class="b" style="left:158px;top:330px;width:3px;height:52px;background:#c2c2c2"></div>
<div class="t" style="left:10px;top:341.0px;font-size:25px;color:#222;font-weight:400;">Chart 6</div>
<svg class="b" style="left:134px;top:338px" width="18" height="36" viewBox="0 0 18 36"><path d="M1.5 12 L8.5 1.5 L15.5 12 Z M1.5 23 L8.5 33.5 L15.5 23 Z" fill="#444"/></svg>
<svg class="b" style="left:187px;top:345px" width="28" height="25" viewBox="0 0 28 25"><path d="M4 2.5 L24 22.5 M24 2.5 L4 22.5" stroke="#cacaca" stroke-width="3.6" stroke-linecap="round"/></svg>
<svg class="b" style="left:244px;top:344px" width="32" height="26" viewBox="0 0 32 26"><path d="M3 12 L11 20.5 L28 3.5" fill="none" stroke="#cccccc" stroke-width="3.8" stroke-linecap="round" stroke-linejoin="round"/></svg>
<svg class="b" style="left:303px;top:340px" width="36" height="34" viewBox="0 0 36 34"><path d="M4 29 Q5.5 31.5 8 30.5 Q10 29.5 11.5 22 L15 8 Q16.5 3 20 3 Q22.5 3 23 4.5" fill="none" stroke="#b9b9b9" stroke-width="2.6" stroke-linecap="round"/><circle cx="4.5" cy="29" r="2" fill="#b9b9b9"/><circle cx="22.5" cy="4.5" r="2" fill="#b9b9b9"/><path d="M8 12.5 L18 12.5" stroke="#b9b9b9" stroke-width="2.2"/><path d="M19 16.5 Q21 14 23 16 L28 25 Q29.5 27.5 32 25.5 M31 16 Q30 14 28.5 15 Q26 17 23.5 21 Q20.5 26 18.5 25" fill="none" stroke="#b9b9b9" stroke-width="2.4" stroke-linecap="round"/></svg>
<div class="b" style="left:350px;top:344px;width:2px;height:25px;background:#dcdcdc"></div>
<svg class="b" style="left:2463px;top:350px" width="16" height="13" viewBox="0 0 16 13"><path d="M0.5 0.5 L15.5 0.5 L8 12 Z" fill="#666"/></svg>
<div class="b" style="left:0px;top:382px;width:2486px;height:2px;background:#b8b8b8"></div>
<div class="b" style="left:0px;top:384px;width:2486px;height:3px;background:#e8e8e8"></div>
<div class="b" style="left:0px;top:386.5px;width:2486px;height:1.5px;background:#bdbdbd"></div>
<div class="b" style="left:35px;top:388px;width:1850px;height:43px;background:linear-gradient(#fdfdfd,#f1f1f1)"></div>
<div class="b" style="left:0px;top:388px;width:35px;height:926px;background:#f6f6f6"></div>
<svg class="b" style="left:0px;top:388px" width="33" height="42" viewBox="0 0 33 42"><path d="M30 6 L30 37 L1 37 Z" fill="#d8d8d8"/></svg>
<div class="b" style="left:0px;top:429.5px;width:1885px;height:2px;background:#c4c4c4"></div>
<div class="b" style="left:33.5px;top:388px;width:2px;height:926px;background:#c4c4c4"></div>
<div class="b" style="left:35.5px;top:431.5px;width:1850px;height:883px;background:#fff"></div>
<div class="b" style="left:432px;top:388px;width:2px;height:42px;background:#d6d6d6"></div>
<div class="b" style="left:432px;top:431px;width:2px;height:883px;background:#d9d9d9"></div>
<div class="b" style="left:648px;top:388px;width:2px;height:42px;background:#d6d6d6"></div>
<div class="b" style="left:648px;top:431px;width:2px;height:883px;background:#d9d9d9"></div>
<div class="b" style="left:742px;top:388px;width:2px;height:42px;background:#d6d6d6"></div>
<div class="b" style="left:742px;top:431px;width:2px;height:883px;background:#d9d9d9"></div>
<div class="b" style="left:872px;top:388px;width:2px;height:42px;background:#d6d6d6"></div>
<div class="b" style="left:872px;top:431px;width:2px;height:883px;background:#d9d9d9"></div>
<div class="b" style="left:1002px;top:388px;width:2px;height:42px;background:#d6d6d6"></div>
<div class="b" style="left:1002px;top:431px;width:2px;height:883px;background:#d9d9d9"></div>
<div class="b" style="left:1132px;top:388px;width:2px;height:42px;background:#d6d6d6"></div>
<div class="b" style="left:1132px;top:431px;width:2px;height:883px;background:#d9d9d9"></div>
<div class="b" style="left:1262px;top:388px;width:2px;height:42px;background:#d6d6d6"></div>
<div class="b" style="left:1262px;top:431px;width:2px;height:883px;background:#d9d9d9"></div>
<div class="b" style="left:1392px;top:388px;width:2px;height:42px;background:#d6d6d6"></div>
<div class="b" style="left:1392px;top:431px;width:2px;height:883px;background:#d9d9d9"></div>
<div class="b" style="left:1522px;top:388px;width:2px;height:42px;background:#d6d6d6"></div>
<div class="b" style="left:1522px;top:431px;width:2px;height:883px;background:#d9d9d9"></div>
<div class="b" style="left:1652px;top:388px;width:2px;height:42px;background:#d6d6d6"></div>
<div class="b" style="left:1652px;top:431px;width:2px;height:883px;background:#d9d9d9"></div>
<div class="b" style="left:1782px;top:388px;width:2px;height:42px;background:#d6d6d6"></div>
<div class="b" style="left:1782px;top:431px;width:2px;height:883px;background:#d9d9d9"></div>
<div class="b" style="left:0px;top:456px;width:33.5px;height:2px;background:#e0e0e0"></div>
<div class="b" style="left:35.5px;top:456px;width:1850px;height:2px;background:#d9d9d9"></div>
<div class="b" style="left:0px;top:482px;width:33.5px;height:2px;background:#e0e0e0"></div>
<div class="b" style="left:35.5px;top:482px;width:1850px;height:2px;background:#d9d9d9"></div>
<div class="b" style="left:0px;top:510px;width:33.5px;height:2px;background:#e0e0e0"></div>
<div class="b" style="left:35.5px;top:510px;width:1850px;height:2px;background:#d9d9d9"></div>
<div class="b" style="left:0px;top:538px;width:33.5px;height:2px;background:#e0e0e0"></div>
<div class="b" style="left:35.5px;top:538px;width:1850px;height:2px;background:#d9d9d9"></div>
<div class="b" style="left:0px;top:574px;width:33.5px;height:2px;background:#e0e0e0"></div>
<div class="b" style="left:35.5px;top:574px;width:1850px;height:2px;background:#d9d9d9"></div>
<div class="b" style="left:0px;top:610px;width:33.5px;height:2px;background:#e0e0e0"></div>
<div class="b" style="left:35.5px;top:610px;width:1850px;height:2px;background:#d9d9d9"></div>
<div class="b" style="left:0px;top:646px;width:33.5px;height:2px;background:#e0e0e0"></div>
<div class="b" style="left:35.5px;top:646px;width:1850px;height:2px;background:#d9d9d9"></div>
<div class="b" style="left:0px;top:682px;width:33.5px;height:2px;background:#e0e0e0"></div>
<div class="b" style="left:35.5px;top:682px;width:1850px;height:2px;background:#d9d9d9"></div>
<div class="b" style="left:0px;top:718px;width:33.5px;height:2px;background:#e0e0e0"></div>
<div class="b" style="left:35.5px;top:718px;width:1850px;height:2px;background:#d9d9d9"></div>
<div class="b" style="left:0px;top:754px;width:33.5px;height:2px;background:#e0e0e0"></div>
<div class="b" style="left:35.5px;top:754px;width:1850px;height:2px;background:#d9d9d9"></div>
<div class="b" style="left:0px;top:790px;width:33.5px;height:2px;background:#e0e0e0"></div>
<div class="b" style="left:35.5px;top:790px;width:1850px;height:2px;background:#d9d9d9"></div>
<div class="b" style="left:0px;top:826px;width:33.5px;height:2px;background:#e0e0e0"></div>
<div class="b" style="left:35.5px;top:826px;width:1850px;height:2px;background:#d9d9d9"></div>
<div class="b" style="left:0px;top:862px;width:33.5px;height:2px;background:#e0e0e0"></div>
<div class="b" style="left:35.5px;top:862px;width:1850px;height:2px;background:#d9d9d9"></div>
<div class="b" style="left:0px;top:898px;width:33.5px;height:2px;background:#e0e0e0"></div>
<div class="b" style="left:35.5px;top:898px;width:1850px;height:2px;background:#d9d9d9"></div>
<div class="b" style="left:0px;top:934px;width:33.5px;height:2px;background:#e0e0e0"></div>
<div class="b" style="left:35.5px;top:934px;width:1850px;height:2px;background:#d9d9d9"></div>
<div class="b" style="left:0px;top:970px;width:33.5px;height:2px;background:#e0e0e0"></div>
<div class="b" style="left:35.5px;top:970px;width:1850px;height:2px;background:#d9d9d9"></div>
<div class="b" style="left:0px;top:1006px;width:33.5px;height:2px;background:#e0e0e0"></div>
<div class="b" style="left:35.5px;top:1006px;width:1850px;height:2px;background:#d9d9d9"></div>
<div class="b" style="left:0px;top:1042px;width:33.5px;height:2px;background:#e0e0e0"></div>
<div class="b" style="left:35.5px;top:1042px;width:1850px;height:2px;background:#d9d9d9"></div>
<div class="b" style="left:0px;top:1078px;width:33.5px;height:2px;background:#e0e0e0"></div>
<div class="b" style="left:35.5px;top:1078px;width:1850px;height:2px;background:#d9d9d9"></div>
<div class="b" style="left:0px;top:1114px;width:33.5px;height:2px;background:#e0e0e0"></div>
<div class="b" style="left:35.5px;top:1114px;width:1850px;height:2px;background:#d9d9d9"></div>
<div class="b" style="left:0px;top:1150px;width:33.5px;height:2px;background:#e0e0e0"></div>
<div class="b" style="left:35.5px;top:1150px;width:1850px;height:2px;background:#d9d9d9"></div>
<div class="b" style="left:0px;top:1186px;width:33.5px;height:2px;background:#e0e0e0"></div>
<div class="b" style="left:35.5px;top:1186px;width:1850px;height:2px;background:#d9d9d9"></div>
<div class="b" style="left:0px;top:1222px;width:33.5px;height:2px;background:#e0e0e0"></div>
<div class="b" style="left:35.5px;top:1222px;width:1850px;height:2px;background:#d9d9d9"></div>
<div class="b" style="left:0px;top:1258px;width:33.5px;height:2px;background:#e0e0e0"></div>
<div class="b" style="left:35.5px;top:1258px;width:1850px;height:2px;background:#d9d9d9"></div>
<div class="b" style="left:0px;top:1294px;width:33.5px;height:2px;background:#e0e0e0"></div>
<div class="b" style="left:35.5px;top:1294px;width:1850px;height:2px;background:#d9d9d9"></div>
<div class="b" style="left:0px;top:1330px;width:33.5px;height:2px;background:#e0e0e0"></div>
<div class="b" style="left:35.5px;top:1330px;width:1850px;height:2px;background:#d9d9d9"></div>
<div class="t" style="left:-766.0px;width:2000px;text-align:center;top:396.6px;font-size:20.5px;color:#555;font-weight:400;">A</div>
<div class="t" style="left:-459.0px;width:2000px;text-align:center;top:396.6px;font-size:20.5px;color:#555;font-weight:400;">B</div>
<div class="t" style="left:-304.0px;width:2000px;text-align:center;top:396.6px;font-size:20.5px;color:#555;font-weight:400;">C</div>
<div class="t" style="left:-192.0px;width:2000px;text-align:center;top:396.6px;font-size:20.5px;color:#555;font-weight:400;">D</div>
<div class="t" style="left:-62.0px;width:2000px;text-align:center;top:396.6px;font-size:20.5px;color:#555;font-weight:400;">E</div>
<div class="t" style="left:68.0px;width:2000px;text-align:center;top:396.6px;font-size:20.5px;color:#555;font-weight:400;">F</div>
<div class="t" style="left:198.0px;width:2000px;text-align:center;top:396.6px;font-size:20.5px;color:#555;font-weight:400;">G</div>
<div class="t" style="left:328.0px;width:2000px;text-align:center;top:396.6px;font-size:20.5px;color:#555;font-weight:400;">H</div>
<div class="t" style="left:458.0px;width:2000px;text-align:center;top:396.6px;font-size:20.5px;color:#555;font-weight:400;">I</div>
<div class="t" style="left:588.0px;width:2000px;text-align:center;top:396.6px;font-size:20.5px;color:#555;font-weight:400;">J</div>
<div class="t" style="left:718.0px;width:2000px;text-align:center;top:396.6px;font-size:20.5px;color:#555;font-weight:400;">K</div>
<div class="t" style="left:848px;width:2000px;text-align:center;top:396.6px;font-size:20.5px;color:#555;font-weight:400;">L</div>
<div class="t" style="left:-988.5px;width:2000px;text-align:center;top:433.2px;font-size:20.5px;color:#555;font-weight:400;">1</div>
<div class="t" style="left:-988.5px;width:2000px;text-align:center;top:459.2px;font-size:20.5px;color:#555;font-weight:400;">2</div>
<div class="t" style="left:-988.5px;width:2000px;text-align:center;top:487.2px;font-size:20.5px;color:#555;font-weight:400;">3</div>
<div class="t" style="left:-988.5px;width:2000px;text-align:center;top:515.2px;font-size:20.5px;color:#555;font-weight:400;">4</div>
<div class="t" style="left:-988.5px;width:2000px;text-align:center;top:551.2px;font-size:20.5px;color:#555;font-weight:400;">5</div>
<div class="t" style="left:-988.5px;width:2000px;text-align:center;top:587.2px;font-size:20.5px;color:#555;font-weight:400;">6</div>
<div class="t" style="left:-988.5px;width:2000px;text-align:center;top:623.2px;font-size:20.5px;color:#555;font-weight:400;">7</div>
<div class="t" style="left:-988.5px;width:2000px;text-align:center;top:659.2px;font-size:20.5px;color:#555;font-weight:400;">8</div>
<div class="t" style="left:-988.5px;width:2000px;text-align:center;top:695.2px;font-size:20.5px;color:#555;font-weight:400;">9</div>
<div class="t" style="left:-988.5px;width:2000px;text-align:center;top:731.2px;font-size:20.5px;color:#555;font-weight:400;">10</div>
<div class="t" style="left:-988.5px;width:2000px;text-align:center;top:767.2px;font-size:20.5px;color:#555;font-weight:400;">11</div>
<div class="t" style="left:-988.5px;width:2000px;text-align:center;top:803.2px;font-size:20.5px;color:#555;font-weight:400;">12</div>
<div class="t" style="left:-988.5px;width:2000px;text-align:center;top:839.2px;font-size:20.5px;color:#555;font-weight:400;">13</div>
<div class="t" style="left:-988.5px;width:2000px;text-align:center;top:875.2px;font-size:20.5px;color:#555;font-weight:400;">14</div>
<div class="t" style="left:-988.5px;width:2000px;text-align:center;top:911.2px;font-size:20.5px;color:#555;font-weight:400;">15</div>
<div class="t" style="left:-988.5px;width:2000px;text-align:center;top:947.2px;font-size:20.5px;color:#555;font-weight:400;">16</div>
<div class="t" style="left:-988.5px;width:2000px;text-align:center;top:983.2px;font-size:20.5px;color:#555;font-weight:400;">17</div>
<div class="t" style="left:-988.5px;width:2000px;text-align:center;top:1019.2px;font-size:20.5px;color:#555;font-weight:400;">18</div>
<div class="t" style="left:-988.5px;width:2000px;text-align:center;top:1055.2px;font-size:20.5px;color:#555;font-weight:400;">19</div>
<div class="t" style="left:-988.5px;width:2000px;text-align:center;top:1091.2px;font-size:20.5px;color:#555;font-weight:400;">20</div>
<div class="t" style="left:-988.5px;width:2000px;text-align:center;top:1127.2px;font-size:20.5px;color:#555;font-weight:400;">21</div>
<div class="t" style="left:-988.5px;width:2000px;text-align:center;top:1163.2px;font-size:20.5px;color:#555;font-weight:400;">22</div>
<div class="t" style="left:-988.5px;width:2000px;text-align:center;top:1199.2px;font-size:20.5px;color:#555;font-weight:400;">23</div>
<div class="t" style="left:-988.5px;width:2000px;text-align:center;top:1235.2px;font-size:20.5px;color:#555;font-weight:400;">24</div>
<div class="t" style="left:-988.5px;width:2000px;text-align:center;top:1271.2px;font-size:20.5px;color:#555;font-weight:400;">25</div>
<div class="t" style="left:-988.5px;width:2000px;text-align:center;top:1307.2px;font-size:20.5px;color:#555;font-weight:400;">26</div>
<div class="b" style="left:35.5px;top:512px;width:397px;height:350px;background:#fff"></div>
<div class="b" style="left:434px;top:512px;width:214px;height:350px;background:#fff"></div>
<div class="b" style="left:35.5px;top:482px;width:614px;height:2px;background:#a6a6a6"></div>
<div class="b" style="left:35.5px;top:510px;width:614px;height:2px;background:#a6a6a6"></div>
<div class="b" style="left:35.5px;top:861.8px;width:614px;height:2px;background:#a6a6a6"></div>
<div class="b" style="left:35.5px;top:897.7px;width:614px;height:2px;background:#a6a6a6"></div>
<div class="b" style="left:432px;top:482px;width:2px;height:417.5px;background:#a6a6a6"></div>
<div class="b" style="left:648px;top:482px;width:2px;height:417.5px;background:#a6a6a6"></div>
<div class="b" style="left:404.5px;top:483px;width:27px;height:28px;background:#f6f6f6;border:2px solid #a9a9a9;border-radius:2px"></div>
<svg class="b" style="left:410px;top:492px" width="16" height="10" viewBox="0 0 16 10"><path d="M1 1 L15 1 L8 9 Z" fill="#888"/></svg>
<div class="t" style="left:40px;top:485.6px;font-size:20.2px;color:#111;font-weight:400;">Row Labels</div>
<div class="t" style="left:438px;top:485.6px;font-size:20.2px;color:#111;font-weight:400;">Sum of Total Payment</div>
<svg class="b" style="left:45px;top:518px" width="15" height="15" viewBox="0 0 15 15"><rect x="1" y="1" width="13" height="13" fill="#e4e9f2" stroke="#9aabcc" stroke-width="1.5"/><rect x="4" y="6.5" width="7" height="2" fill="#2b3f77"/></svg>
<div class="t" style="left:63.5px;top:513.6px;font-size:20.2px;color:#111;font-weight:400;">Client A</div>
<div class="t" style="left:-1357.5px;width:2000px;text-align:right;top:513.6px;font-size:20.2px;color:#111;font-weight:400;">4267.65</div>
<div class="t" style="left:89.8px;top:541.6px;font-size:20.2px;color:#111;font-weight:400;">Q1 Network Scheduled Maintenance</div>
<div class="t" style="left:-1357.5px;width:2000px;text-align:right;top:541.6px;font-size:20.2px;color:#111;font-weight:400;">2223</div>
<div class="t" style="left:89.8px;top:577.6px;font-size:20.2px;color:#111;font-weight:400;">XDR Rollout</div>
<div class="t" style="left:-1357.5px;width:2000px;text-align:right;top:577.6px;font-size:20.2px;color:#111;font-weight:400;">2044.65</div>
<svg class="b" style="left:45px;top:618px" width="15" height="15" viewBox="0 0 15 15"><rect x="1" y="1" width="13" height="13" fill="#e4e9f2" stroke="#9aabcc" stroke-width="1.5"/><rect x="4" y="6.5" width="7" height="2" fill="#2b3f77"/></svg>
<div class="t" style="left:63.5px;top:613.6px;font-size:20.2px;color:#111;font-weight:400;">Client B</div>
<div class="t" style="left:-1357.5px;width:2000px;text-align:right;top:613.6px;font-size:20.2px;color:#111;font-weight:400;">9399</div>
<div class="t" style="left:89.8px;top:649.6px;font-size:20.2px;color:#111;font-weight:400;">Network Switch Rollout</div>
<div class="t" style="left:-1357.5px;width:2000px;text-align:right;top:649.6px;font-size:20.2px;color:#111;font-weight:400;">7344.35</div>
<div class="t" style="left:89.8px;top:685.6px;font-size:20.2px;color:#111;font-weight:400;">Q1 Network Scheduled Maintenance</div>
<div class="t" style="left:-1357.5px;width:2000px;text-align:right;top:685.6px;font-size:20.2px;color:#111;font-weight:400;">2054.65</div>
<svg class="b" style="left:45px;top:726px" width="15" height="15" viewBox="0 0 15 15"><rect x="1" y="1" width="13" height="13" fill="#e4e9f2" stroke="#9aabcc" stroke-width="1.5"/><rect x="4" y="6.5" width="7" height="2" fill="#2b3f77"/></svg>
<div class="t" style="left:63.5px;top:721.6px;font-size:20.2px;color:#111;font-weight:400;">Client C</div>
<div class="t" style="left:-1357.5px;width:2000px;text-align:right;top:721.6px;font-size:20.2px;color:#111;font-weight:400;">1860.3</div>
<div class="t" style="left:89.8px;top:757.6px;font-size:20.2px;color:#111;font-weight:400;">Q1 Network Scheduled Maintenance</div>
<div class="t" style="left:-1357.5px;width:2000px;text-align:right;top:757.6px;font-size:20.2px;color:#111;font-weight:400;">1860.3</div>
<svg class="b" style="left:45px;top:798px" width="15" height="15" viewBox="0 0 15 15"><rect x="1" y="1" width="13" height="13" fill="#e4e9f2" stroke="#9aabcc" stroke-width="1.5"/><rect x="4" y="6.5" width="7" height="2" fill="#2b3f77"/></svg>
<div class="t" style="left:63.5px;top:793.6px;font-size:20.2px;color:#111;font-weight:400;">(blank)</div>
<div class="t" style="left:89.8px;top:829.6px;font-size:20.2px;color:#111;font-weight:400;">(blank)</div>
<div class="t" style="left:40px;top:865.6px;font-size:20.2px;color:#111;font-weight:400;">Grand Total</div>
<div class="t" style="left:-1357.5px;width:2000px;text-align:right;top:865.6px;font-size:20.2px;color:#111;font-weight:400;">15526.95</div>
<div class="b" style="left:717px;top:573px;width:1104px;height:430px;background:#fff"></div>
<div class="b" style="left:708px;top:564px;width:1122px;height:2px;background:#a9a9a9"></div>
<div class="b" style="left:708px;top:1010px;width:1122px;height:2px;background:#a9a9a9"></div>
<div class="b" style="left:708px;top:564px;width:2px;height:448px;background:#a9a9a9"></div>
<div class="b" style="left:1828px;top:564px;width:2px;height:448px;background:#a9a9a9"></div>
<div class="b" style="left:716px;top:572px;width:1106px;height:2px;background:#cacaca"></div>
<div class="b" style="left:716px;top:1002px;width:1106px;height:2px;background:#cacaca"></div>
<div class="b" style="left:716px;top:572px;width:2px;height:432px;background:#cacaca"></div>
<div class="b" style="left:1820px;top:572px;width:2px;height:432px;background:#cacaca"></div>
<div class="b" style="left:705.5px;top:561.5px;width:15px;height:15px;background:#fff;border:1.5px solid #666;border-radius:2px;box-shadow:0 1px 3px rgba(0,0,0,.25)"></div>
<div class="b" style="left:705.5px;top:999.5px;width:15px;height:15px;background:#fff;border:1.5px solid #666;border-radius:2px;box-shadow:0 1px 3px rgba(0,0,0,.25)"></div>
<div class="b" style="left:1259.0px;top:561.5px;width:15px;height:15px;background:#fff;border:1.5px solid #666;border-radius:2px;box-shadow:0 1px 3px rgba(0,0,0,.25)"></div>
<div class="b" style="left:1259.0px;top:999.5px;width:15px;height:15px;background:#fff;border:1.5px solid #666;border-radius:2px;box-shadow:0 1px 3px rgba(0,0,0,.25)"></div>
<div class="b" style="left:1817.5px;top:561.5px;width:15px;height:15px;background:#fff;border:1.5px solid #666;border-radius:2px;box-shadow:0 1px 3px rgba(0,0,0,.25)"></div>
<div class="b" style="left:1817.5px;top:999.5px;width:15px;height:15px;background:#fff;border:1.5px solid #666;border-radius:2px;box-shadow:0 1px 3px rgba(0,0,0,.25)"></div>
<div class="b" style="left:705.5px;top:779.5px;width:15px;height:15px;background:#fff;border:1.5px solid #666;border-radius:2px;box-shadow:0 1px 3px rgba(0,0,0,.25)"></div>
<div class="b" style="left:1817.5px;top:779.5px;width:15px;height:15px;background:#fff;border:1.5px solid #666;border-radius:2px;box-shadow:0 1px 3px rgba(0,0,0,.25)"></div>
<div class="t" style="left:266.5px;width:2000px;text-align:center;top:587.5px;font-size:28px;color:#595959;font-weight:400;">Total</div>
<div class="b" style="left:783px;top:880.0px;width:711px;height:2px;background:#d9d9d9"></div>
<div class="t" style="left:-1234px;width:2000px;text-align:right;top:871.9px;font-size:18px;color:#595959;font-weight:400;">0</div>
<div class="b" style="left:783px;top:850.25px;width:711px;height:2px;background:#d9d9d9"></div>
<div class="t" style="left:-1234px;width:2000px;text-align:right;top:842.2px;font-size:18px;color:#595959;font-weight:400;">1000</div>
<div class="b" style="left:783px;top:820.5px;width:711px;height:2px;background:#d9d9d9"></div>
<div class="t" style="left:-1234px;width:2000px;text-align:right;top:812.4px;font-size:18px;color:#595959;font-weight:400;">2000</div>
<div class="b" style="left:783px;top:790.75px;width:711px;height:2px;background:#d9d9d9"></div>
<div class="t" style="left:-1234px;width:2000px;text-align:right;top:782.7px;font-size:18px;color:#595959;font-weight:400;">3000</div>
<div class="b" style="left:783px;top:761.0px;width:711px;height:2px;background:#d9d9d9"></div>
<div class="t" style="left:-1234px;width:2000px;text-align:right;top:752.9px;font-size:18px;color:#595959;font-weight:400;">4000</div>
<div class="b" style="left:783px;top:731.25px;width:711px;height:2px;background:#d9d9d9"></div>
<div class="t" style="left:-1234px;width:2000px;text-align:right;top:723.2px;font-size:18px;color:#595959;font-weight:400;">5000</div>
<div class="b" style="left:783px;top:701.5px;width:711px;height:2px;background:#d9d9d9"></div>
<div class="t" style="left:-1234px;width:2000px;text-align:right;top:693.4px;font-size:18px;color:#595959;font-weight:400;">6000</div>
<div class="b" style="left:783px;top:671.75px;width:711px;height:2px;background:#d9d9d9"></div>
<div class="t" style="left:-1234px;width:2000px;text-align:right;top:663.7px;font-size:18px;color:#595959;font-weight:400;">7000</div>
<div class="b" style="left:783px;top:642.0px;width:711px;height:2px;background:#d9d9d9"></div>
<div class="t" style="left:-1234px;width:2000px;text-align:right;top:633.9px;font-size:18px;color:#595959;font-weight:400;">8000</div>
<div class="b" style="left:782px;top:881px;width:2px;height:111px;background:#d9d9d9"></div>
<div class="b" style="left:1018.5px;top:881px;width:2px;height:111px;background:#d9d9d9"></div>
<div class="b" style="left:1255.5px;top:881px;width:2px;height:111px;background:#d9d9d9"></div>
<div class="b" style="left:1374.5px;top:881px;width:2px;height:111px;background:#d9d9d9"></div>
<div class="b" style="left:1493px;top:881px;width:2px;height:111px;background:#d9d9d9"></div>
<div class="b" style="left:814.95px;top:814.86575px;width:54.6px;height:66.13425px;background:#fee386"></div>
<div class="b" style="left:933.45px;top:820.1716625px;width:54.6px;height:60.8283375px;background:#fbbd22"></div>
<div class="b" style="left:1051.95px;top:662.5055875px;width:54.6px;height:218.4944125px;background:#00aeef"></div>
<div class="b" style="left:1170.45px;top:819.8741625px;width:54.6px;height:61.1258375px;background:#0070c0"></div>
<div class="b" style="left:1288.95px;top:825.656075px;width:54.6px;height:55.343925px;background:#7030a0"></div>
<div class="t" style="left:-157.75px;width:2000px;text-align:center;top:894.9px;font-size:18px;color:#595959;font-weight:400;">Q1 Network</div>
<div class="t" style="left:-157.75px;width:2000px;text-align:center;top:916.5px;font-size:18px;color:#595959;font-weight:400;">Scheduled</div>
<div class="t" style="left:-157.75px;width:2000px;text-align:center;top:938.1px;font-size:18px;color:#595959;font-weight:400;">Maintenance</div>
<div class="t" style="left:-39.25px;width:2000px;text-align:center;top:894.9px;font-size:18px;color:#595959;font-weight:400;">XDR Rollout</div>
<div class="t" style="left:79.25px;width:2000px;text-align:center;top:894.9px;font-size:18px;color:#595959;font-weight:400;">Network</div>
<div class="t" style="left:79.25px;width:2000px;text-align:center;top:916.5px;font-size:18px;color:#595959;font-weight:400;">Switch Rollout</div>
<div class="t" style="left:197.75px;width:2000px;text-align:center;top:894.9px;font-size:18px;color:#595959;font-weight:400;">Q1 Network</div>
<div class="t" style="left:197.75px;width:2000px;text-align:center;top:916.5px;font-size:18px;color:#595959;font-weight:400;">Scheduled</div>
<div class="t" style="left:197.75px;width:2000px;text-align:center;top:938.1px;font-size:18px;color:#595959;font-weight:400;">Maintenance</div>
<div class="t" style="left:316.25px;width:2000px;text-align:center;top:894.9px;font-size:18px;color:#595959;font-weight:400;">Q1 Network</div>
<div class="t" style="left:316.25px;width:2000px;text-align:center;top:916.5px;font-size:18px;color:#595959;font-weight:400;">Scheduled</div>
<div class="t" style="left:316.25px;width:2000px;text-align:center;top:938.1px;font-size:18px;color:#595959;font-weight:400;">Maintenance</div>
<div class="t" style="left:434.75px;width:2000px;text-align:center;top:894.9px;font-size:18px;color:#595959;font-weight:400;">(blank)</div>
<div class="t" style="left:-99px;width:2000px;text-align:center;top:972.2px;font-size:18px;color:#595959;font-weight:400;">Client A</div>
<div class="t" style="left:138px;width:2000px;text-align:center;top:972.2px;font-size:18px;color:#595959;font-weight:400;">Client B</div>
<div class="t" style="left:316px;width:2000px;text-align:center;top:972.2px;font-size:18px;color:#595959;font-weight:400;">Client C</div>
<div class="t" style="left:434.5px;width:2000px;text-align:center;top:972.2px;font-size:18px;color:#595959;font-weight:400;">(blank)</div>
<div class="b" style="left:1526px;top:664.3px;width:9px;height:9px;background:#fee386"></div>
<div class="t" style="left:1539px;top:658.7px;font-size:18px;color:#595959;font-weight:400;">Client A Q1 Network Scheduled</div>
<div class="t" style="left:1539px;top:680.5px;font-size:18px;color:#595959;font-weight:400;">Maintenance</div>
<div class="b" style="left:1526px;top:718.3px;width:9px;height:9px;background:#fbbd22"></div>
<div class="t" style="left:1539px;top:712.7px;font-size:18px;color:#595959;font-weight:400;">Client A XDR Rollout</div>
<div class="b" style="left:1526px;top:771.3px;width:9px;height:9px;background:#00aeef"></div>
<div class="t" style="left:1539px;top:765.7px;font-size:18px;color:#595959;font-weight:400;">Client B Network Switch Rollout</div>
<div class="b" style="left:1526px;top:825.3px;width:9px;height:9px;background:#0070c0"></div>
<div class="t" style="left:1539px;top:819.7px;font-size:18px;color:#595959;font-weight:400;">Client B Q1 Network Scheduled</div>
<div class="t" style="left:1539px;top:841.5px;font-size:18px;color:#595959;font-weight:400;">Maintenance</div>
<div class="b" style="left:1526px;top:878.5px;width:9px;height:9px;background:#7030a0"></div>
<div class="t" style="left:1539px;top:872.9px;font-size:18px;color:#595959;font-weight:400;">Client C Q1 Network Scheduled</div>
<div class="t" style="left:1539px;top:894.7px;font-size:18px;color:#595959;font-weight:400;">Maintenance</div>
<div class="b" style="left:1526px;top:932.3px;width:9px;height:9px;background:#00a2e8"></div>
<div class="t" style="left:1539px;top:926.7px;font-size:18px;color:#595959;font-weight:400;">(blank) (blank)</div>
<div class="b" style="left:1885px;top:388px;width:601px;height:926px;background:#ececec"></div>
<div class="b" style="left:1884px;top:388px;width:2px;height:926px;background:#c9c9c9"></div>
<div class="b" style="left:1886.5px;top:388px;width:300.5px;height:52px;background:#e5e5e5"></div>
<div class="b" style="left:1886.5px;top:440px;width:302px;height:2px;background:#c9c9c9"></div>
<div class="b" style="left:2186px;top:390px;width:2px;height:52px;background:#cdcdcd;border-top-left-radius:4px"></div>
<div class="b" style="left:2186px;top:388px;width:300px;height:2px;background:#cdcdcd"></div>
<div class="t" style="left:1902.5px;top:394.1px;font-size:27.6px;color:#222;font-weight:400;-webkit-text-stroke:0.3px currentColor;">Format Chart Area</div>
<div class="t" style="left:2203px;top:393.3px;font-size:27.6px;color:#222;font-weight:400;-webkit-text-stroke:0.3px currentColor;">PivotChart Fields</div>
<svg class="b" style="left:2442px;top:401px" width="28" height="28" viewBox="0 0 28 28"><circle cx="14" cy="14" r="14" fill="#777"/><path d="M8.5 8.5 L19.5 19.5 M19.5 8.5 L8.5 19.5" stroke="#fff" stroke-width="2.6" stroke-linecap="round"/></svg>
<div class="t" style="left:1915.5px;top:487.9px;font-size:25.5px;color:#b3b3b3;font-weight:700;">FIELD NAME</div>
<div class="b" style="left:2257.5px;top:485.5px;width:260px;height:33.5px;background:#fff;border:1px solid #d8d8d8;border-radius:9px;box-shadow:0 1px 1px rgba(0,0,0,.12)"></div>
<svg class="b" style="left:2270px;top:488px" width="28" height="28" viewBox="0 0 28 28"><circle cx="11.5" cy="11.5" r="9" fill="none" stroke="#222" stroke-width="2.4"/><path d="M18 18 L25 25" stroke="#222" stroke-width="3" stroke-linecap="round"/></svg>
<div class="t" style="left:2311px;top:488.2px;font-size:23.3px;color:#b9b9b9;font-weight:400;">Search fields</div>
<div class="b" style="left:1894px;top:548px;width:600px;height:197px;background:#74a98a"></div>
<div class="b" style="left:1898px;top:555px;width:600px;height:183px;background:#fff"></div>
<div class="b" style="left:1898px;top:600px;width:600px;height:44px;background:#03662f"></div>
<div class="b" style="left:1914px;top:564px;width:28px;height:28px;background:#fff;border:1px solid #c9c9c9;border-radius:6px;box-shadow:0 0.5px 1px rgba(0,0,0,.15)"></div>
<div class="t" style="left:1955.5px;top:563.5px;font-size:26.6px;color:#222;font-weight:400;">WO ID</div>
<div class="b" style="left:1914px;top:608px;width:28px;height:28px;background:linear-gradient(#2a8a55,#0d6a3a);border-radius:6px;box-shadow:0 0.5px 1px rgba(0,0,0,.3)"></div>
<svg class="b" style="left:1914px;top:608px" width="28" height="28" viewBox="0 0 28 28"><path d="M7 14.5 L12 19.5 L21 8.5" fill="none" stroke="#fff" stroke-width="3.2" stroke-linecap="round" stroke-linejoin="round"/></svg>
<div class="t" style="left:1955.5px;top:607.5px;font-size:26.6px;color:#fff;font-weight:400;">Client</div>
<div class="b" style="left:1914px;top:652px;width:28px;height:28px;background:linear-gradient(#2a8a55,#0d6a3a);border-radius:6px;box-shadow:0 0.5px 1px rgba(0,0,0,.3)"></div>
<svg class="b" style="left:1914px;top:652px" width="28" height="28" viewBox="0 0 28 28"><path d="M7 14.5 L12 19.5 L21 8.5" fill="none" stroke="#fff" stroke-width="3.2" stroke-linecap="round" stroke-linejoin="round"/></svg>
<div class="t" style="left:1955.5px;top:651.5px;font-size:26.6px;color:#222;font-weight:400;">Project</div>
<div class="b" style="left:1914px;top:696px;width:28px;height:28px;background:#fff;border:1px solid #c9c9c9;border-radius:6px;box-shadow:0 0.5px 1px rgba(0,0,0,.15)"></div>
<div class="t" style="left:1955.5px;top:695.5px;font-size:26.6px;color:#222;font-weight:400;">Location Name</div>
<div class="b" style="left:1891px;top:536px;width:64px;height:207px;border:3px solid #f92616"></div>
<div class="b" style="left:2211px;top:756px;width:12px;height:12px;background:#d4d4d4;border-radius:50%"></div>
<svg class="b" style="left:1904px;top:790px" width="32" height="31" viewBox="0 0 32 31"><ellipse cx="15" cy="6.5" rx="12.5" ry="5" fill="none" stroke="#555" stroke-width="3"/><path d="M4 9 L12.5 19 L12.5 28 Q15 30 17.5 28 L17.5 19 L26 9" fill="#555"/></svg>
<div class="t" style="left:1955px;top:790.5px;font-size:26.6px;color:#222;font-weight:400;">Filters</div>
<svg class="b" style="left:2242px;top:793px" width="28" height="24" viewBox="0 0 28 24"><rect x="1" y="1" width="5" height="22" fill="#555"/><rect x="11" y="1" width="5" height="22" fill="#555"/><rect x="21" y="1" width="5" height="22" fill="#555"/></svg>
<div class="t" style="left:2291.5px;top:790.5px;font-size:26.6px;color:#222;font-weight:400;">Legend (Series)</div>
<div class="b" style="left:1897.5px;top:836px;width:304px;height:292px;background:#fff;box-shadow:0 0 0 1px #dedede"></div>
<div class="b" style="left:2234px;top:836px;width:260px;height:292px;background:#fff;box-shadow:0 0 0 1px #dedede"></div>
<svg class="b" style="left:1906px;top:1162px" width="26" height="28" viewBox="0 0 26 28"><rect x="1" y="1" width="23" height="5" fill="#555"/><rect x="1" y="11" width="23" height="5" fill="#555"/><rect x="1" y="21" width="23" height="5" fill="#555"/></svg>
<div class="t" style="left:1955px;top:1162.8px;font-size:26.6px;color:#222;font-weight:400;">Axis (Categories)</div>
<svg class="b" style="left:2242px;top:1162px" width="28" height="30" viewBox="0 0 28 30"><path d="M2 2 L25 2 L26 8 L23 6 L9 6 L17 15 L8 24 L23 24 L26 21 L25 28 L2 28 L2 26 L12 15 L2 4 Z" fill="#555"/></svg>
<div class="t" style="left:2290px;top:1162.8px;font-size:26.6px;color:#222;font-weight:400;">Values</div>
<div class="b" style="left:1897.5px;top:1213px;width:304.5px;height:101px;background:#fff;box-shadow:0 0 0 1px #dedede"></div>
<div class="b" style="left:2232.5px;top:1213px;width:260px;height:101px;background:#fff;box-shadow:0 0 0 1px #dedede"></div>
<div class="b" style="left:1924.5px;top:1228px;width:5px;height:5px;background:#aaa;border-radius:50%"></div>
<div class="b" style="left:1924.5px;top:1238px;width:5px;height:5px;background:#aaa;border-radius:50%"></div>
<div class="t" style="left:1941px;top:1222.5px;font-size:22.8px;color:#333;font-weight:400;">Client</div>
<svg class="b" style="left:2160px;top:1223px" width="25" height="25" viewBox="0 0 25 25"><circle cx="12.5" cy="12.5" r="12" fill="#c4c4c4"/><circle cx="14.5" cy="6" r="2" fill="#fff"/><path d="M10 10.5 L15 10.5 L12.5 20 L14.5 20 L14 21.5 L9 21.5 L11.5 12 L9.7 12 Z" fill="#fff"/></svg>
<div class="b" style="left:1924.5px;top:1272px;width:5px;height:5px;background:#aaa;border-radius:50%"></div>
<div class="b" style="left:1924.5px;top:1282px;width:5px;height:5px;background:#aaa;border-radius:50%"></div>
<div class="t" style="left:1941px;top:1266.5px;font-size:22.8px;color:#333;font-weight:400;">Project</div>
<svg class="b" style="left:2160px;top:1267px" width="25" height="25" viewBox="0 0 25 25"><circle cx="12.5" cy="12.5" r="12" fill="#c4c4c4"/><circle cx="14.5" cy="6" r="2" fill="#fff"/><path d="M10 10.5 L15 10.5 L12.5 20 L14.5 20 L14 21.5 L9 21.5 L11.5 12 L9.7 12 Z" fill="#fff"/></svg>
<div class="b" style="left:2259.5px;top:1228px;width:5px;height:5px;background:#aaa;border-radius:50%"></div>
<div class="b" style="left:2259.5px;top:1238px;width:5px;height:5px;background:#aaa;border-radius:50%"></div>
<div class="t" style="left:2275.5px;top:1222.5px;font-size:22.8px;color:#333;font-weight:400;">Sum of Total Paym...</div>
<div class="b" style="left:1891px;top:1130px;width:587px;height:172px;border:3px solid #f92616"></div>
</body></html>
